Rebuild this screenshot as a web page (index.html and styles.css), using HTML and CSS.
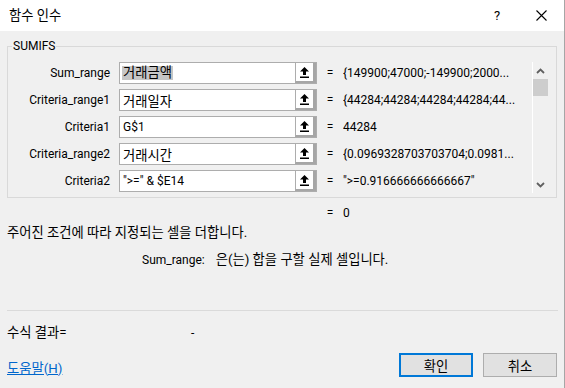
FILE: index.html
```html
<!DOCTYPE html>
<html lang="ko">
<head>
<meta charset="utf-8">
<title>함수 인수</title>
<link rel="stylesheet" href="styles.css">
</head>
<body>
<div class="window">
  <div class="titlebar">
    <span class="title ko">함수 인수</span>
    <span class="help">?</span>
    <span class="close">
      <svg width="11" height="11" viewBox="0 0 11 11"><path d="M0.5 0.5 L10.5 10.5 M10.5 0.5 L0.5 10.5" stroke="#000" stroke-width="1.1" fill="none"/></svg>
    </span>
  </div>
  <div class="content">
    <fieldset class="group">
      <legend>SUMIFS</legend>
      <div class="group-inner">
        <div class="rows">
          <div class="row">
            <span class="label">Sum_range</span>
            <div class="input"><span class="field"><span class="sel ko">거래금액</span></span><span class="pick"><svg width="9" height="11" viewBox="0 0 9 11"><polygon points="4.5,0 9,4.5 6,4.5 6,8 3,8 3,4.5 0,4.5" fill="#000"/><rect x="0" y="9.5" width="9" height="1.5" fill="#000"/></svg></span></div>
            <span class="eq">=</span>
            <span class="val">{149900;47000;-149900;2000...</span>
          </div>
          <div class="row">
            <span class="label">Criteria_range1</span>
            <div class="input"><span class="field ko">거래일자</span><span class="pick"><svg width="9" height="11" viewBox="0 0 9 11"><polygon points="4.5,0 9,4.5 6,4.5 6,8 3,8 3,4.5 0,4.5" fill="#000"/><rect x="0" y="9.5" width="9" height="1.5" fill="#000"/></svg></span></div>
            <span class="eq">=</span>
            <span class="val">{44284;44284;44284;44284;44...</span>
          </div>
          <div class="row">
            <span class="label">Criteria1</span>
            <div class="input"><span class="field">G$1</span><span class="pick"><svg width="9" height="11" viewBox="0 0 9 11"><polygon points="4.5,0 9,4.5 6,4.5 6,8 3,8 3,4.5 0,4.5" fill="#000"/><rect x="0" y="9.5" width="9" height="1.5" fill="#000"/></svg></span></div>
            <span class="eq">=</span>
            <span class="val">44284</span>
          </div>
          <div class="row">
            <span class="label">Criteria_range2</span>
            <div class="input"><span class="field ko">거래시간</span><span class="pick"><svg width="9" height="11" viewBox="0 0 9 11"><polygon points="4.5,0 9,4.5 6,4.5 6,8 3,8 3,4.5 0,4.5" fill="#000"/><rect x="0" y="9.5" width="9" height="1.5" fill="#000"/></svg></span></div>
            <span class="eq">=</span>
            <span class="val">{0.0969328703703704;0.0981...</span>
          </div>
          <div class="row">
            <span class="label">Criteria2</span>
            <div class="input"><span class="field">"&gt;=" &amp; $E14</span><span class="pick"><svg width="9" height="11" viewBox="0 0 9 11"><polygon points="4.5,0 9,4.5 6,4.5 6,8 3,8 3,4.5 0,4.5" fill="#000"/><rect x="0" y="9.5" width="9" height="1.5" fill="#000"/></svg></span></div>
            <span class="eq">=</span>
            <span class="val">"&gt;=0.916666666666667"</span>
          </div>
        </div>
        <div class="scrollbar">
          <div class="sb-btn"><svg width="9" height="6" viewBox="0 0 9 6"><path d="M1 5 L4.5 1.5 L8 5" stroke="#606060" stroke-width="1.8" fill="none"/></svg></div>
          <div class="sb-thumb"></div>
          <div class="sb-track"></div>
          <div class="sb-btn"><svg width="9" height="6" viewBox="0 0 9 6"><path d="M1 1 L4.5 4.5 L8 1" stroke="#606060" stroke-width="1.8" fill="none"/></svg></div>
        </div>
      </div>
    </fieldset>
    <div class="result"><span class="eq">=</span><span class="res-val">0</span></div>
    <p class="desc ko">주어진 조건에 따라 지정되는 셀을 더합니다.</p>
    <p class="argdesc"><span class="argname">Sum_range:</span><span class="ko">은(는) 합을 구할 실제 셀입니다.</span></p>
    <div class="sep"></div>
    <div class="formula"><span class="f-label ko">수식 결과=</span><span class="f-val">-</span></div>
    <div class="footer">
      <a class="help-link ko" href="#">도움말(H)</a>
      <div class="buttons">
        <button class="btn primary ko">확인</button>
        <button class="btn ko">취소</button>
      </div>
    </div>
  </div>
</div>
</body>
</html>
```

FILE: styles.css
```css
* { box-sizing: border-box; }
html, body { margin: 0; padding: 0; }
body {
  width: 565px;
  height: 388px;
  overflow: hidden;
  font-family: Roboto, "Noto Sans CJK KR", sans-serif;
  font-size: 12px;
  color: #000;
  background: #f0f0f0;
}
.ko {
  font-size: 13.3px;
}
.window {
  width: 565px;
  height: 388px;
  background: #f0f0f0;
  border-right: 1px solid #a6a6a6;
  display: flex;
  flex-direction: column;
}
.titlebar {
  height: 31px;
  background: #fff;
  display: flex;
  align-items: center;
  flex-shrink: 0;
}
.title {
  padding-left: 9px;
  flex: 1;
  line-height: 16px;
}
.help {
  width: 30px;
  text-align: center;
  font-size: 13px;
  margin-right: 6px;
}
.close {
  width: 46px;
  display: flex;
  justify-content: center;
  align-items: center;
}
.content {
  padding-left: 7px;
  display: flex;
  flex-direction: column;
}
.group {
  margin: 8px 0 0 0;
  width: 550px;
  border: 1px solid #d9d9d9;
  padding: 9px 8px 4px 0;
  min-width: 0;
}
.group legend {
  padding: 0 1px;
  margin-left: 4px;
  line-height: 14px;
  font-size: 12px;
}
.group-inner {
  display: flex;
}
.rows {
  width: 524px;
  display: flex;
  flex-direction: column;
  gap: 5px;
}
.row {
  display: flex;
  align-items: center;
  height: 22px;
}
.label {
  width: 102px;
  text-align: right;
  margin-right: 9px;
  white-space: nowrap;
}
.input {
  width: 198px;
  height: 22px;
  border: 1px solid #adadad;
  display: flex;
}
.field {
  flex: 1;
  background: #fff;
  padding-left: 3px;
  display: flex;
  align-items: center;
  white-space: nowrap;
}
.sel {
  background: #c6c6c6;
  line-height: 14px;
  padding: 0 1px;
  margin-left: -1px;
}
.pick {
  width: 21px;
  background: #fff;
  border-left: 1px solid #adadad;
  border-right: 3px solid #a6a6a6;
  border-bottom: 2px solid #a6a6a6;
  display: flex;
  justify-content: center;
  align-items: center;
  padding-top: 1px;
}
.eq {
  width: 26px;
  text-align: center;
}
.val {
  flex: 1;
  white-space: nowrap;
  overflow: hidden;
}
.scrollbar {
  width: 16px;
  height: 131px;
  border-left: 1px solid #fff;
  display: flex;
  flex-direction: column;
}
.sb-btn {
  height: 17px;
  display: flex;
  justify-content: center;
  align-items: center;
}
.sb-thumb {
  height: 17px;
  background: #cdcdcd;
}
.sb-track { flex: 1; }
.result {
  display: flex;
  padding-left: 310px;
  margin-top: 7px;
  line-height: 16px;
}
.desc {
  margin: 4px 0 0 0;
  line-height: 16px;
}
.argdesc {
  margin: 11px 0 0 135px;
  line-height: 16px;
}
.argname { margin-right: 11px; }
.sep {
  margin-top: 42px;
  width: 551px;
  height: 1px;
  background: #dadada;
}
.formula {
  margin-top: 14px;
  line-height: 16px;
  display: flex;
}
.f-label { width: 184px; }
.footer {
  margin-top: 12px;
  display: flex;
  align-items: center;
  justify-content: space-between;
  padding-right: 7px;
}
.help-link {
  color: #0066cc;
  text-decoration: underline;
  margin-top: 4px;
}
.buttons {
  display: flex;
  gap: 10px;
}
.btn {
  width: 74px;
  height: 24px;
  background: #e1e1e1;
  border: 1px solid #adadad;
  font-family: Roboto, "Noto Sans CJK KR", sans-serif;
  color: #000;
  padding: 0;
}
.btn.primary {
  border: 2px solid #0078d7;
}
```
